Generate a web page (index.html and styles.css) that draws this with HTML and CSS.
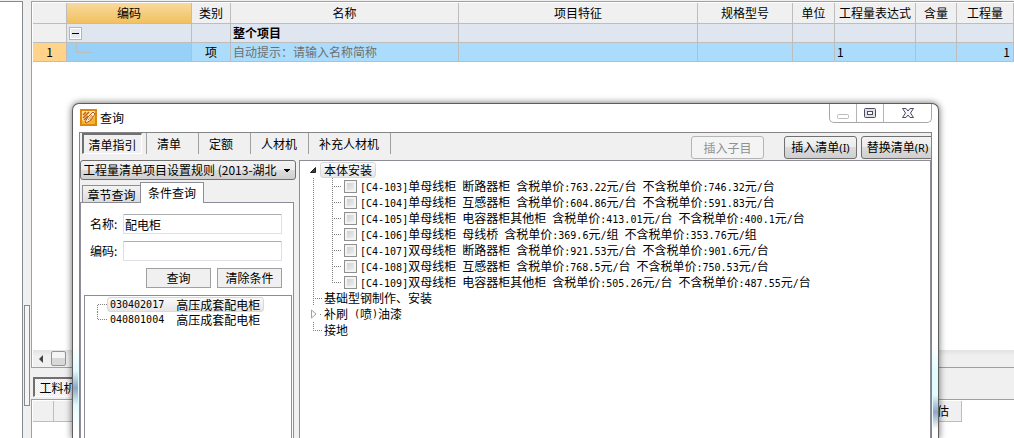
FILE: index.html
```html
<!DOCTYPE html>
<html lang="zh-CN">
<head>
<meta charset="utf-8">
<title>查询</title>
<link rel="stylesheet" href="styles.css">
</head>
<body>
<svg class="defs" width="0" height="0" aria-hidden="true">
  <symbol id="leaf" viewBox="0 0 44 16"><path d="M13.5 0V16M32.5 0V16M34 8.5H42"/></symbol>
  <symbol id="leaf-end" viewBox="0 0 44 16"><path d="M13.5 0V16M32.5 0V9M34 8.5H42"/></symbol>
  <symbol id="node" viewBox="0 0 24 16"><path d="M13.5 0V16M15 8.5H22"/></symbol>
  <symbol id="node-end" viewBox="0 0 24 16"><path d="M13.5 0V9M15 8.5H22"/></symbol>
</svg>
<div class="app">
  <aside class="side"></aside>
  <div class="splitter"><span class="grip"></span></div>
  <main class="main">
    <div class="sheet">
      <table class="grid">
        <colgroup><col class="c-no"><col class="c-code"><col class="c-kind"><col class="c-name"><col><col class="c-spec"><col class="c-unit"><col class="c-expr"><col class="c-rate"><col class="c-qty"></colgroup>
        <thead>
          <tr><th></th><th class="picked">编码</th><th>类别</th><th>名称</th><th>项目特征</th><th>规格型号</th><th>单位</th><th>工程量表达式</th><th>含量</th><th>工程量</th></tr>
        </thead>
        <tbody>
          <tr class="total"><td class="no"></td><td class="fold-cell"><button class="fold" aria-label="折叠"></button></td><td></td><td><b>整个项目</b></td><td></td><td></td><td></td><td></td><td></td><td></td></tr>
          <tr class="current"><td class="no on">1</td><td class="code"><svg width="26" height="18" viewBox="0 0 26 18"><path d="M9.500 0V9.500H25"/></svg></td><td class="mid">项</td><td class="hint">自动提示：请输入名称简称</td><td></td><td></td><td></td><td>1</td><td></td><td class="num">1</td></tr>
        </tbody>
      </table>
      <div class="hscroll">
        <svg width="18" height="16" viewBox="0 0 18 16"><path d="M10 4V12L6 8Z"/></svg>
        <span class="thumb"></span>
      </div>
    </div>
    <div class="lower-tabs"><button class="pressed">工料机</button></div>
    <div class="lower"><span class="cell"></span><span class="cell wide">估</span></div>
  </main>
</div>

<section class="dialog" role="dialog" aria-labelledby="title">
  <header class="titlebar">
    <svg class="logo" width="17" height="17" viewBox="0 0 17 17">
      <rect x="1" y="1" width="15" height="15" fill="#ffe9a8" stroke="#e0860f" stroke-width="2"/>
      <path d="M2 15V11L6 13L10 12L15 7V15Z" fill="#f5b52c"/>
      <path d="M3 6L6 3M3 9L9 3M4 11L8 7" stroke="#c55c10" stroke-width="1.500" fill="none"/>
      <path d="M13 3L8 8L5 13L6 14L11 11L15 5Z" fill="#fffaf0" stroke="#b8560c"/>
      <path d="M8 11L12 6M10 11L13 7" stroke="#d7821c"/>
    </svg>
    <h1 id="title">查询</h1>
    <div class="winbtns">
      <button aria-label="最小化"><svg width="14" height="14" viewBox="0 0 14 14"><rect x="1.500" y="8.500" width="11" height="4" rx="1" fill="#fff" stroke="#bbb"/></svg></button>
      <button aria-label="最大化"><svg width="14" height="14" viewBox="0 0 14 14"><rect x="1.500" y="2.500" width="11" height="9" rx="1" fill="#e0e0e8" stroke="#4c4c60"/><rect x="4.500" y="5.500" width="5" height="3" fill="#fff" stroke="#4c4c60"/></svg></button>
      <button class="close" aria-label="关闭"><svg width="14" height="14" viewBox="0 0 14 14"><path d="M1.500 2.500H5L7 5L9 2.500H12.500L9.500 7L12.500 11.500H9L7 9L5 11.500H1.500L4.500 7Z" fill="#f4f4f8" stroke="#4c4c60"/></svg></button>
    </div>
  </header>
  <div class="content">
    <nav class="toolbar">
      <button class="tab pressed">清单指引</button>
      <button class="tab">清单</button>
      <button class="tab">定额</button>
      <button class="tab">人材机</button>
      <button class="tab">补充人材机</button>
      <div class="actions">
        <button class="act" disabled>插入子目</button>
        <button class="act">插入清单<span class="key">(I)</span></button>
        <button class="act">替换清单<span class="key">(R)</span></button>
      </div>
    </nav>
    <div class="panes">
      <div class="query">
        <select class="rule" aria-label="规则"><option>工程量清单项目设置规则 (2013-湖北</option></select>
        <div class="subtabs"><button>章节查询</button><button class="active">条件查询</button></div>
        <form class="form">
          <div class="field"><label for="name">名称:</label><input id="name" type="text" value="配电柜"></div>
          <div class="field"><label for="code">编码:</label><input id="code" type="text"></div>
          <div class="buttons"><button type="button">查询</button><button type="button">清除条件</button></div>
          <ul class="results">
            <li><svg width="22" height="15" viewBox="0 0 22 15"><path d="M12.500 15V7.500H22"/></svg><span class="hit"><span class="m">030402017</span><span>高压成套配电柜</span></span></li>
            <li><svg width="22" height="15" viewBox="0 0 22 15"><path d="M12.500 0V7.500H22"/></svg><span class="item"><span class="m">040801004</span><span>高压成套配电柜</span></span></li>
          </ul>
        </form>
      </div>
      <ul class="tree">
        <li class="root"><svg width="20" height="16" viewBox="0 0 20 16"><path class="solid" d="M15.500 5.500V10.500H10.500Z"/></svg><span class="chosen">本体安装</span></li>
        <li><svg class="wide"><use href="#leaf"/></svg><input type="checkbox" id="k1"><label for="k1"><span class="m">[C4-103]</span>单母线柜<span class="m"> </span>断路器柜<span class="m"> </span>含税单价<span class="m">:763.22</span>元<span class="m">/</span>台<span class="m"> </span>不含税单价<span class="m">:746.32</span>元<span class="m">/</span>台</label></li>
        <li><svg class="wide"><use href="#leaf"/></svg><input type="checkbox" id="k2"><label for="k2"><span class="m">[C4-104]</span>单母线柜<span class="m"> </span>互感器柜<span class="m"> </span>含税单价<span class="m">:604.86</span>元<span class="m">/</span>台<span class="m"> </span>不含税单价<span class="m">:591.83</span>元<span class="m">/</span>台</label></li>
        <li><svg class="wide"><use href="#leaf"/></svg><input type="checkbox" id="k3"><label for="k3"><span class="m">[C4-105]</span>单母线柜<span class="m"> </span>电容器柜其他柜<span class="m"> </span>含税单价<span class="m">:413.01</span>元<span class="m">/</span>台<span class="m"> </span>不含税单价<span class="m">:400.1</span>元<span class="m">/</span>台</label></li>
        <li><svg class="wide"><use href="#leaf"/></svg><input type="checkbox" id="k4"><label for="k4"><span class="m">[C4-106]</span>单母线柜<span class="m"> </span>母线桥<span class="m"> </span>含税单价<span class="m">:369.6</span>元<span class="m">/</span>组<span class="m"> </span>不含税单价<span class="m">:353.76</span>元<span class="m">/</span>组</label></li>
        <li><svg class="wide"><use href="#leaf"/></svg><input type="checkbox" id="k5"><label for="k5"><span class="m">[C4-107]</span>双母线柜<span class="m"> </span>断路器柜<span class="m"> </span>含税单价<span class="m">:921.53</span>元<span class="m">/</span>台<span class="m"> </span>不含税单价<span class="m">:901.6</span>元<span class="m">/</span>台</label></li>
        <li><svg class="wide"><use href="#leaf"/></svg><input type="checkbox" id="k6"><label for="k6"><span class="m">[C4-108]</span>双母线柜<span class="m"> </span>互感器柜<span class="m"> </span>含税单价<span class="m">:768.5</span>元<span class="m">/</span>台<span class="m"> </span>不含税单价<span class="m">:750.53</span>元<span class="m">/</span>台</label></li>
        <li><svg class="wide"><use href="#leaf-end"/></svg><input type="checkbox" id="k7"><label for="k7"><span class="m">[C4-109]</span>双母线柜<span class="m"> </span>电容器柜其他柜<span class="m"> </span>含税单价<span class="m">:505.26</span>元<span class="m">/</span>台<span class="m"> </span>不含税单价<span class="m">:487.55</span>元<span class="m">/</span>台</label></li>
        <li><svg class="short"><use href="#node"/></svg>基础型钢制作、安装</li>
        <li><svg class="short" viewBox="0 0 24 16"><path class="hollow" d="M11.500 4V12L16 8Z"/><path d="M20 8.500H22"/></svg>补刷<span class="m"> (</span>喷<span class="m">)</span>油漆</li>
        <li><svg class="short"><use href="#node-end"/></svg>接地</li>
      </ul>
    </div>
  </div>
</section>
</body>
</html>
```

FILE: styles.css
```css
* { box-sizing: border-box; }
body {
  margin: 0;
  height: 100vh;
  overflow: hidden;
  background: #f0f0f0;
  color: #000;
  font: 12px/16px "Noto Sans CJK SC", sans-serif;
}
button, input, select { font: inherit; color: inherit; margin: 0; padding: 0; }
button { white-space: nowrap; }
ul { list-style: none; margin: 0; padding: 0; }
svg { display: block; flex: none; }
.defs { position: absolute; }
.m { font: 10px/14px "DejaVu Sans Mono", monospace; white-space: pre; }

/* Background window */
.app { display: flex; height: 100%; padding-top: 1px; }
.side { width: 23px; flex: none; background: #fff; border: solid #858b8f; border-width: 1px 1px 0 0; }
.splitter { width: 8px; flex: none; padding: 304px 1px 0; }
.grip { display: block; height: 101px; border: 1px solid #858b8f; background: #f5f5f5; }
.main { flex: 1; min-width: 0; display: flex; flex-direction: column; }
.sheet { flex: none; height: 367px; display: flex; flex-direction: column; background: #fff; border: solid #a0a0a0; border-width: 1px 0 1px 1px; padding: 1px 0 0 1px; }

.grid { width: 100%; table-layout: fixed; border-collapse: separate; border-spacing: 0; }
.grid th, .grid td { height: 19px; padding: 0 2px; border: solid #bdbdbd; border-width: 0 1px 1px 0; font-weight: normal; text-align: left; white-space: nowrap; overflow: hidden; }
.grid th { height: 21px; background: #f0f0f0; text-align: center; padding: 0; }
.grid th.picked { background: linear-gradient(#f9d99f, #f1c15f); }
.grid td { line-height: 18px; }
.c-no { width: 34px; } .c-code { width: 125px; } .c-kind { width: 39px; } .c-name { width: 228px; }
.c-spec { width: 95px; } .c-unit { width: 42px; } .c-expr { width: 81px; } .c-rate { width: 41px; } .c-qty { width: 57px; }
.total td { background: #dfe6f0; }
.total td.no { background: #f0f0f0; }
.current td { background: #abdcfb; }
.current td.code { background: #97d1f8; padding: 0; }
.current td.no { background: #ffd38a; text-align: center; }
.current td.mid { text-align: center; }
.current td.hint { color: #707070; }
.current td.num { text-align: right; padding-right: 3px; }
.code svg { fill: none; stroke: #bdbdbd; }
.fold { display: block; width: 13px; height: 13px; border: 1px solid #b5b5b5; background: linear-gradient(#000, #000) center / 7px 1px no-repeat, #e6e9ee; box-shadow: inset 0 0 0 1px #fff; }

.hscroll { display: flex; align-items: center; height: 17px; margin-top: auto; background: linear-gradient(#e2e2e2, #f0f0f0 6px); }
.hscroll svg { fill: #444; }
.thumb { width: 15px; height: 15px; border: 1px solid #959595; border-radius: 2px; background: linear-gradient(#f5f5f5 50%, #d8d8d8 50%); }
.lower-tabs { flex: none; height: 31px; padding: 9px 0 0 2px; }
.pressed { border: solid #707070; border-width: 2px 1px 1px 2px; border-right-color: #fff; border-bottom-color: #fff; background: repeating-conic-gradient(#ececec 0 25%, #fff 0 50%) 0 0 / 2px 2px; }
.lower-tabs .pressed { display: block; height: 20px; width: 48px; line-height: 16px; }
.lower { flex: 1; display: flex; align-items: flex-start; background: #fff; border: solid #a0a0a0; border-width: 1px 0 0 1px; padding: 1px 0 0 1px; }
.cell { width: 21px; height: 21px; background: #f0f0f0; border: solid #bdbdbd; border-width: 0 1px 1px 0; }
.cell.wide { flex: 1; margin-right: 52px; padding-right: 12px; line-height: 20px; text-align: right; }

/* Dialog frame, with the glass glints on its side edges */
.dialog {
  position: absolute; left: 72px; right: 75px; top: 103px; bottom: -1px;
  display: flex; flex-direction: column;
  background:
    linear-gradient(#fff0, #8fa5c4 50%, #fff0) left 0 bottom 34px / 5px 34px no-repeat,
    linear-gradient(#fff0, #8fa5c4 50%, #fff0) right 0 bottom 10px / 5px 34px no-repeat,
    linear-gradient(#fff, #e2fbff 30%, #e2fbff 70%, #fff) left 0 bottom 10px / 6px 84px no-repeat,
    linear-gradient(#fff, #e2fbff 30%, #e2fbff 70%, #fff) right 0 bottom 10px / 6px 84px no-repeat,
    #fff;
  border: 1px solid #5e5e5e; border-bottom: 0; border-radius: 7px 7px 0 0;
  box-shadow: 0 0 7px rgba(0, 0, 0, .6);
  padding: 0 6px;
}
.titlebar { display: flex; flex: none; height: 28px; padding-left: 1px; }
.logo { margin-top: 5px; }
.titlebar h1 { margin: 0 0 0 3px; font: inherit; line-height: 27px; }
.winbtns { display: flex; height: 19px; margin-left: auto; border: 1px solid #a6a6a6; border-top: 0; border-radius: 0 0 5px 5px; }
.winbtns button { width: 27px; border: 0; border-right: 1px solid #b4b4b4; background: none; display: flex; align-items: center; justify-content: center; }
.winbtns button.close { width: 47px; border: 0; }

.content { flex: 1; min-height: 0; display: flex; flex-direction: column; background: #f0f0f0; border: solid #858585; border-width: 1px 1px 0; overflow: hidden; }
.toolbar { display: flex; flex: none; height: 27px; padding-left: 2px; }
.tab { height: 21px; padding: 0 10px; border: 0; border-right: 1px solid #a0a0a0; background: none; line-height: 20px; }
.tab + .tab { padding: 0 17px 0 10px; }
.tab:nth-child(n + 4) { padding: 0 11px 0 10px; }
.tab.pressed { width: 60px; padding: 0; margin-right: 4px; border: solid #707070; border-width: 2px 1px 1px 2px; border-right-color: #fff; border-bottom-color: #fff; }
.tab:nth-child(2) { border-left: 1px solid #a0a0a0; }
.actions { display: flex; margin-left: auto; margin-right: -3px; padding-top: 3px; }
.act { width: 73px; height: 23px; margin-left: 4px; border: 1px solid #707070; border-radius: 3px; background: linear-gradient(#f3f3f3, #ebebeb 50%, #dcdcdc 50%, #cfcfcf); }
.act:disabled { margin-right: 16px; border-color: #b5b5b5; background: #f4f4f4; color: #909090; }
.key { font-family: "Noto Sans", sans-serif; font-size: 11px; }

.panes { flex: 1; min-height: 0; display: flex; gap: 3px; }
.query { width: 216px; flex: none; display: flex; flex-direction: column; }
.rule {
  flex: none; width: 100%; height: 20px; appearance: none;
  border: 1px solid #707070; border-radius: 3px; padding: 0 18px 0 2px; line-height: 16px;
  background:
    linear-gradient(45deg, transparent 50%, #000 50%) right 8px top 8px / 4px 4px no-repeat,
    linear-gradient(315deg, transparent 50%, #000 50%) right 4px top 8px / 4px 4px no-repeat,
    linear-gradient(#f3f3f3, #ebebeb 50%, #dcdcdc 50%, #cfcfcf);
  background:
    conic-gradient(from 315deg at 50% 100%, #000 90deg, transparent 0) 0 0 / 0 0 no-repeat,
    linear-gradient(to bottom left, #000 50%, transparent 50%) right 8px top 8px / 4px 4px no-repeat,
    linear-gradient(to bottom right, #000 50%, transparent 50%) right 4px top 8px / 4px 4px no-repeat,
    linear-gradient(#f3f3f3, #ebebeb 50%, #dcdcdc 50%, #cfcfcf);
}
.subtabs { flex: none; display: flex; align-items: flex-end; height: 22px; padding: 2px 0 0 2px; }
.subtabs button { width: 58px; height: 17px; border: 1px solid #8d8c99; border-width: 1px 0 0 1px; background: linear-gradient(#f3f3f3, #ddd); line-height: 15px; }
.subtabs button.active { position: relative; z-index: 1; width: 64px; height: 21px; margin-bottom: -1px; border-width: 1px 1px 0; background: #fff; line-height: 18px; }
.form { flex: 1; min-height: 0; margin-right: 2px; display: flex; flex-direction: column; background: #fff; border: solid #8d8c99; border-width: 1px 1px 0; padding: 11px 1px 0 3px; }
.field { display: flex; flex: none; align-items: center; margin: 0 10px 7px 6px; }
.field label { width: 33px; }
.field input { flex: 1; min-width: 0; height: 20px; padding: 0 1px; border: 1px solid #dcdfe8; border-top-color: #abadb3; border-radius: 1px; background: #fff; }
.buttons { flex: none; display: flex; justify-content: flex-end; gap: 6px; padding-right: 10px; margin-bottom: 7px; }
.buttons button { width: 65px; height: 20px; border: 1px solid #a0a0a0; background: #f0f0f0; line-height: 16px; }
.results { flex: 1; border: solid #8d8c99; border-width: 1px 1px 0; padding-top: 1px; line-height: 15px; }
.results li { display: flex; height: 15px; }
.results svg { fill: none; stroke: #808080; stroke-dasharray: 1 1; }
.hit, .item { display: flex; gap: 12px; height: 15px; padding: 0 3px 0 2px; border: 1px solid transparent; line-height: 13px; }
.hit .m, .item .m { line-height: 13px; }
.hit { border-color: #d9d9d9; border-radius: 3px; background: linear-gradient(#fafafa, #e6e6e6); }

.tree { flex: 1; min-width: 0; padding: 1px 0; background: #fff; border: solid #8d8c99; border-width: 1px 1px 0; }
.tree li { display: flex; align-items: center; height: 16px; white-space: nowrap; }
.tree svg { fill: none; stroke: #808080; stroke-dasharray: 1 1; }
.tree svg.wide { width: 44px; height: 16px; }
.tree svg.short { width: 24px; height: 16px; }
.tree .solid { fill: #404040; stroke: #202020; stroke-dasharray: none; }
.tree .hollow { stroke: #a0a0a0; stroke-dasharray: none; }
.chosen { padding: 0 3px; border: 1px solid #d9d9d9; border-radius: 3px; background: linear-gradient(#fafafa, #e6e6e6); line-height: 14px; }
.tree input { appearance: none; flex: none; width: 13px; height: 13px; margin-right: 3px; border: 1px solid #8e8f8f; background: linear-gradient(135deg, #c4c9cf, #f6f6f6); box-shadow: inset 0 0 0 2px #f4f4f4; }
```
